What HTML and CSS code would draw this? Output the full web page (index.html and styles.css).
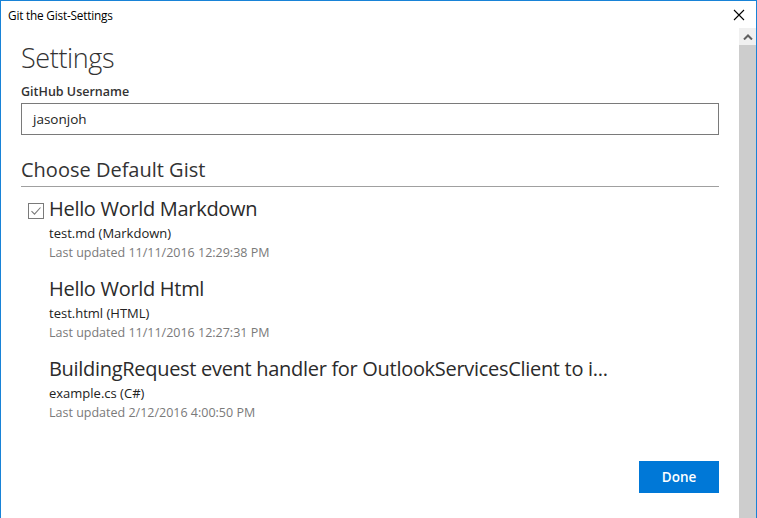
FILE: index.html
```html
<!DOCTYPE html>
<html>
<head>
<meta charset="utf-8">
<link rel="stylesheet" href="styles.css">
</head>
<body>
<div class="window">
  <div class="titlebar">
    <span class="title">Git the Gist-Settings</span>
    <svg class="close" width="12" height="12" viewBox="0 0 12 12"><path d="M1 1L11 11M11 1L1 11" stroke="#000" stroke-width="1.1" fill="none"/></svg>
  </div>
  <div class="main">
    <div class="content">
      <h1 class="heading">Settings</h1>
      <div class="label">GitHub Username</div>
      <div class="input">jasonjoh</div>
      <h2 class="section">Choose Default Gist</h2>
      <div class="list">
        <div class="item">
          <div class="check">
            <svg width="16" height="16" viewBox="0 0 16 16"><rect x="0.5" y="0.5" width="15" height="15" fill="#fff" stroke="#7a7a7a"/><path d="M3.5 8.2L6.5 11.2L12.5 4.5" stroke="#7a7a7a" stroke-width="1.1" fill="none"/></svg>
          </div>
          <div class="info">
            <div class="name">Hello World Markdown</div>
            <div class="file">test.md (Markdown)</div>
            <div class="date">Last updated 11/11/2016 12:29:38 PM</div>
          </div>
        </div>
        <div class="item">
          <div class="check"></div>
          <div class="info">
            <div class="name">Hello World Html</div>
            <div class="file">test.html (HTML)</div>
            <div class="date">Last updated 11/11/2016 12:27:31 PM</div>
          </div>
        </div>
        <div class="item">
          <div class="check"></div>
          <div class="info">
            <div class="name">BuildingRequest event handler for OutlookServicesClient to i...</div>
            <div class="file">example.cs (C#)</div>
            <div class="date">Last updated 2/12/2016 4:00:50 PM</div>
          </div>
        </div>
      </div>
      <div class="footer">
        <button class="done">Done</button>
      </div>
    </div>
    <div class="scrollbar">
      <div class="arrow">
        <svg width="10" height="6" viewBox="0 0 10 6"><path d="M1 5.5L5 1.5L9 5.5" stroke="#606060" stroke-width="2" fill="none"/></svg>
      </div>
      <div class="thumb"></div>
    </div>
  </div>
</div>
</body>
</html>
```
FILE: styles.css
```css
html, body {
  margin: 0;
  padding: 0;
  background: #fff;
  overflow: hidden;
}
body {
  font-family: "Open Sans", "Noto Sans", sans-serif;
  color: #222;
}
.window {
  width: 757px;
  height: 518px;
  box-sizing: border-box;
  border: 1px solid #1883d7;
  border-bottom: none;
  display: flex;
  flex-direction: column;
}
.titlebar {
  height: 27px;
  display: flex;
  align-items: center;
  justify-content: space-between;
  padding-left: 7px;
  padding-right: 11px;
  flex: none;
}
.title {
  font-size: 11.8px;
  color: #000;
  letter-spacing: -0.2px;
}
.close {
  display: block;
}
.main {
  flex: 1;
  display: flex;
  min-height: 0;
}
.content {
  flex: 1;
  padding: 0 20px 0 20px;
  display: flex;
  flex-direction: column;
}
.heading {
  margin: 12px 0 0 0;
  font-size: 27px;
  font-weight: 300;
  line-height: 36px;
  color: #333;
  letter-spacing: -0.4px;
}
.label {
  margin-top: 7px;
  font-size: 12.5px;
  font-weight: 600;
  color: #333;
  line-height: 17px;
}
.input {
  margin-top: 3px;
  height: 32px;
  box-sizing: border-box;
  border: 1px solid #7a7a7a;
  padding-left: 11px;
  display: flex;
  align-items: center;
  font-size: 13.5px;
  color: #222;
}
.section {
  margin: 22px 0 0 0;
  font-size: 20px;
  font-weight: 400;
  line-height: 26px;
  color: #333;
  padding-bottom: 3px;
  border-bottom: 1px solid #a0a0a0;
}
.list {
  display: flex;
  flex-direction: column;
  gap: 14px;
  margin-top: 10px;
}
.item {
  display: flex;
  gap: 5px;
  padding-left: 7px;
}
.check {
  width: 16px;
  flex: none;
  padding-top: 6px;
}
.check svg {
  display: block;
}
.name {
  font-size: 20px;
  line-height: 24px;
  color: #2b2b2b;
  letter-spacing: -0.3px;
}
.file {
  margin-top: 2px;
  font-size: 13px;
  line-height: 20px;
  color: #222;
}
.date {
  font-size: 12.5px;
  line-height: 20px;
  color: #7a7a7a;
}
.footer {
  margin-top: auto;
  margin-bottom: 25px;
  display: flex;
  justify-content: flex-end;
}
.done {
  width: 80px;
  height: 32px;
  border: none;
  background: #0078d7;
  color: #fff;
  font-family: inherit;
  font-size: 13.5px;
  font-weight: 600;
  padding: 0;
}
.scrollbar {
  width: 17px;
  flex: none;
  display: flex;
  flex-direction: column;
}
.arrow {
  height: 17px;
  background: #f0f0f0;
  display: flex;
  align-items: center;
  justify-content: center;
}
.arrow svg {
  display: block;
}
.thumb {
  flex: 1;
  background: #cdcdcd;
}
```
